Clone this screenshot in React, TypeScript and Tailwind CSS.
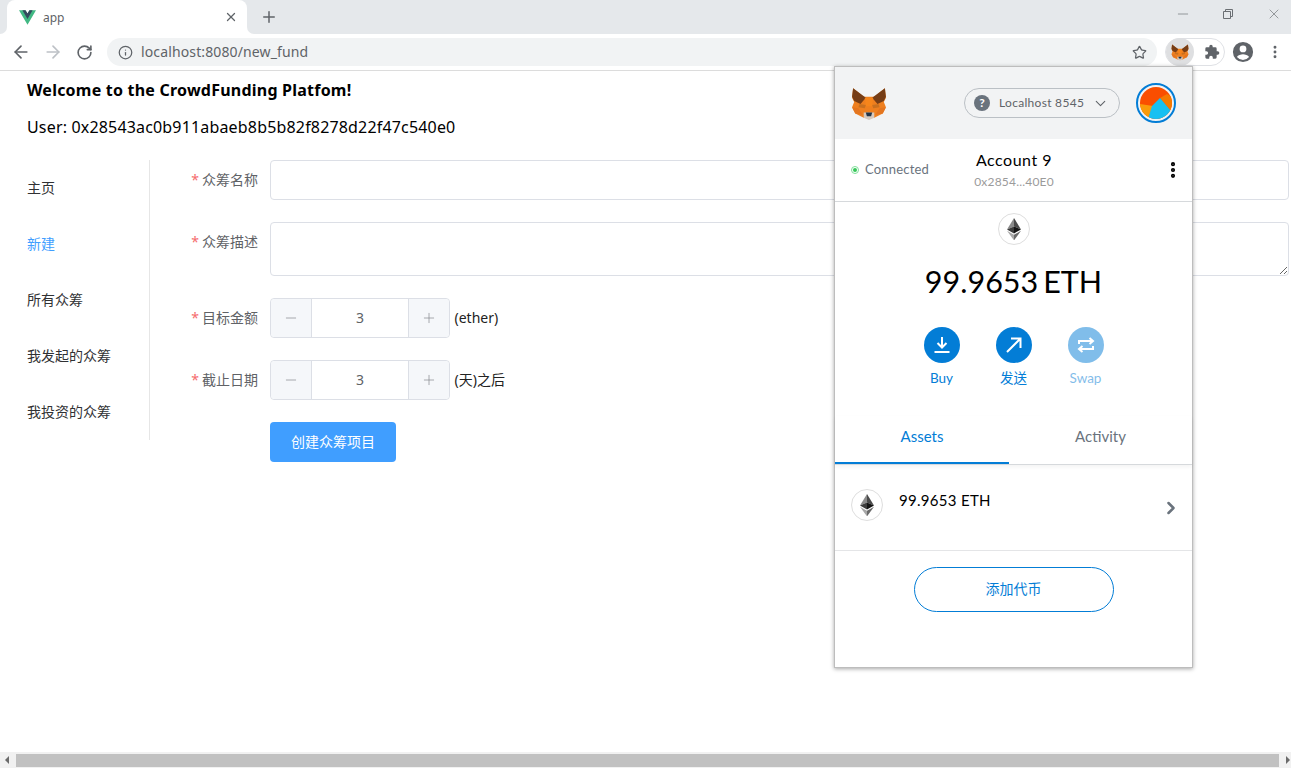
import { ArrowLeft, ArrowRight, RotateCw, Info, Star, Plus, X, Minus, MoreVertical, ChevronDown, ChevronRight } from 'lucide-react';

const cjk = '"Noto Sans CJK SC"';

function VueLogo() {
  return (
    <svg width="17" height="15" viewBox="0 0 256 221">
      <path d="M204.8 0H256L128 220.8 0 0h97.92L128 51.2 157.44 0h47.36Z" fill="#41B883" />
      <path d="M50.56 0 128 133.12 204.8 0h-47.36L128 51.2 97.92 0H50.56Z" fill="#35495E" />
    </svg>
  );
}

function Fox({ size }: { size: number }) {
  return (
    <svg width={size} height={size} viewBox="0 0 34 34">
      <polygon points="2,3 12,11 22,11 32,3 33,12 31,16 33,21 30,27 22,31 12,31 4,27 1,21 3,16 1,12" fill="#ee7f1f" />
      <polygon points="2,3 14,12 9,18 3,15 1,11" fill="#763d16" />
      <polygon points="32,3 20,12 25,18 31,15 33,11" fill="#763d16" />
      <polygon points="13,12 21,12 20,20 14,20" fill="#f6851b" />
      <polygon points="8,18 14,19 13,22 7,21" fill="#c9701f" />
      <polygon points="26,18 20,19 21,22 27,21" fill="#c9701f" />
      <polygon points="1,21 7,22 11,28 4,27" fill="#e4751f" />
      <polygon points="33,21 27,22 23,28 30,27" fill="#e4751f" />
      <polygon points="12,26 22,26 22,31 17,33 12,31" fill="#d7c9bd" />
      <polygon points="14,26 20,26 19,29.500 15,29.500" fill="#233447" />
    </svg>
  );
}

function EthMark({ size }: { size: number }) {
  return (
    <svg width={size} height={size * 1.6} viewBox="0 0 20 32">
      <polygon points="10,0 0,16.3 10,12" fill="#8a8a8a" />
      <polygon points="10,0 20,16.3 10,12" fill="#4a4a4a" />
      <polygon points="10,12 0,16.3 10,22" fill="#3c3c3c" />
      <polygon points="10,12 20,16.3 10,22" fill="#141414" />
      <polygon points="0,18.3 10,32 10,24" fill="#a8a8a8" />
      <polygon points="20,18.3 10,32 10,24" fill="#6a6a6a" />
    </svg>
  );
}

function EthBadge() {
  return (
    <div className="flex h-8 w-8 items-center justify-center rounded-full border border-[#dedede] bg-white">
      <EthMark size={14} />
    </div>
  );
}

function Stepper({ suffix }: { suffix: string }) {
  return (
    <div className="flex items-center">
      <div className="flex h-10 w-[180px] rounded border border-[#dcdfe6] text-[14px] text-[#606266]">
        <span className="flex w-[41px] items-center justify-center rounded-l bg-[#f5f7fa] border-r border-[#dcdfe6]">
          <Minus size={16} strokeWidth={1} className="text-[#808388]" />
        </span>
        <span className="flex flex-1 items-center justify-center pb-[1px]">3</span>
        <span className="flex w-[41px] items-center justify-center rounded-r bg-[#f5f7fa] border-l border-[#dcdfe6]">
          <Plus size={16} strokeWidth={1} className="text-[#808388]" />
        </span>
      </div>
      <span className="ml-[4.500px] pb-[1px] text-[14px] text-[#222]">{suffix}</span>
    </div>
  );
}

function FormRow({ label, children, className }: { label: string; children: React.ReactNode; className?: string }) {
  return (
    <div className={`flex ${className ?? ''}`}>
      <label className="flex h-10 w-[120px] shrink-0 items-center justify-end pb-[1px] pr-3 text-[14px] text-[#606266]">
        <span className="mr-[3px] text-[#f56c6c]">*</span>
        {label}
      </label>
      <div className="min-w-0 flex-1">{children}</div>
    </div>
  );
}

function ActionButton({ label, faded, children }: { label: string; faded?: boolean; children: React.ReactNode }) {
  return (
    <div className={`flex w-9 flex-col items-center ${faded ? 'opacity-50' : ''}`}>
      <div className="flex h-9 w-9 items-center justify-center rounded-full bg-[#037dd6]">{children}</div>
      <span className="mt-[7px] whitespace-nowrap text-[13.500px] leading-[16px] text-[#037dd6]">{label}</span>
    </div>
  );
}

function MetaMaskPopup() {
  return (
    <div className="absolute left-[834px] top-[66px] flex h-[602px] w-[359px] flex-col border border-[#bdbdbd] bg-white font-['Lato','Noto_Sans_CJK_SC',sans-serif] shadow-[0_1px_4px_rgba(0,0,0,0.35)]">
      <div className="flex h-[72px] shrink-0 items-center justify-between bg-[#f2f3f4] pl-[16px] pr-4">
        <Fox size={36} />
        <div className="flex items-center gap-4">
          <div className="flex h-[30px] w-[156px] items-center rounded-full border border-[#bbc0c5] pl-[9px] pr-[10px] text-[12px] text-[#5f6368]">
            <span className="flex h-[16px] w-[16px] items-center justify-center rounded-full bg-[#6a737d] text-[12px] font-bold leading-none text-white">?</span>
            <span className="ml-[9px] flex-1 whitespace-nowrap tracking-[0.3px]">Localhost 8545</span>
            <ChevronDown size={17} strokeWidth={1.5} className="text-[#5f6368]" />
          </div>
          <div className="flex h-10 w-10 items-center justify-center rounded-full border-2 border-[#037dd6]">
            <svg width="32" height="32" viewBox="0 0 32 32" className="rounded-full">
              <rect width="32" height="32" fill="#fa4e00" />
              <polygon points="20,11 27,7 32,10 32,24 31,24" fill="#f57a00" />
              <polygon points="0,17 13,19 8,32 0,32" fill="#f99b0a" />
              <polygon points="20,11 31,24 32,32 8,32 12,19" fill="#17c0f2" />
            </svg>
          </div>
        </div>
      </div>
      <div className="relative flex h-[63px] shrink-0 items-center border-b border-[#d6d9dc] pl-[16px]">
        <span className="flex h-[8px] w-[8px] items-center justify-center rounded-full border border-[#7fe09a] bg-white">
          <span className="h-[4px] w-[4px] rounded-full bg-[#37c75a]" />
        </span>
        <span className="ml-[6px] text-[13px] tracking-[0.2px] text-[#6a737d]">Connected</span>
        <div className="absolute left-[140px] top-[11px] flex w-[78px] flex-col items-center whitespace-nowrap">
          <span className="text-[16px] leading-[20px] tracking-[0.5px] text-black">Account 9</span>
          <span className="mt-[4px] text-[12px] leading-[16px] tracking-[0.2px] text-[#9b9b9b]">0x2854...40E0</span>
        </div>
        <MoreVertical size={20} strokeWidth={3} className="absolute right-[9px] top-[21px] text-black" />
      </div>
      <div className="flex flex-col items-center pt-[11px]">
        <EthBadge />
        <div className="mt-[16px] flex h-10 items-center gap-[5px] text-[30.500px] leading-10 text-black">
          <span>99.9653</span>
          <span>ETH</span>
        </div>
        <div className="mt-[26px] flex gap-9">
          <ActionButton label="Buy">
            <svg width="18" height="18" viewBox="0 0 18 18" fill="none" stroke="white" strokeWidth="2">
              <path d="M9 1v10M4.500 7 9 11.500 13.500 7M1.500 16h15" />
            </svg>
          </ActionButton>
          <ActionButton label="发送">
            <svg width="18" height="18" viewBox="0 0 18 18" fill="none" stroke="white" strokeWidth="2">
              <path d="M2 16 15 3M6 2.500h9.500V12" />
            </svg>
          </ActionButton>
          <ActionButton label="Swap" faded>
            <svg width="18" height="18" viewBox="0 0 18 18" fill="none" stroke="white" strokeWidth="2">
              <path d="M2 8V5h13M12.500 2 16 5l-3.500 3M16 10v3H3M5.500 10 2 13l3.500 3" />
            </svg>
          </ActionButton>
        </div>
      </div>
      <div className="mt-[30px] flex h-[49px] shrink-0 border-b border-[#d6d9dc] text-[15px] shadow-[0_2px_4px_rgba(0,0,0,0.05)]">
        <div className="flex w-[174px] items-start justify-center border-b-2 border-[#037dd6] pt-[9px] text-[#037dd6]">Assets</div>
        <div className="flex flex-1 items-start justify-center pt-[9px] text-[#6a737d]">Activity</div>
      </div>
      <div className="relative flex h-[86px] shrink-0 border-b border-[#e4e5e7] pl-[16px] pt-[24px]">
        <EthBadge />
        <span className="ml-4 -mt-[1px] text-[15px] leading-[24px] tracking-[0.3px] text-black">99.9653 ETH</span>
        <ChevronRight size={20} strokeWidth={3} className="absolute right-[11px] top-[33px] text-[#6a737d]" />
      </div>
      <div className="flex justify-center pt-[16px]">
        <div className="flex h-[45px] w-[200px] items-center justify-center rounded-full border border-[#037dd6] pb-[2px] text-[14px] text-[#037dd6]">添加代币</div>
      </div>
    </div>
  );
}

export default function App() {
  const menu = ['主页', '新建', '所有众筹', '我发起的众筹', '我投资的众筹'];

  return (
    <div className="relative flex h-screen w-full flex-col overflow-hidden bg-white" style={{ fontFamily: `"Noto Sans", ${cjk}, sans-serif` }}>
      {/* tab strip */}
      <div className="relative flex h-[34px] shrink-0 items-stretch bg-[#e5e8eb] pl-[7px]">
        <div className="relative flex w-[240px] items-center rounded-t-lg bg-white pl-3 pr-[9px]">
          <span className="absolute bottom-0 -left-[7px] h-[7px] w-[7px] bg-white">
            <span className="block h-full w-full rounded-br-[7px] bg-[#e5e8eb]" />
          </span>
          <span className="absolute bottom-0 -right-[7px] h-[7px] w-[7px] bg-white">
            <span className="block h-full w-full rounded-bl-[7px] bg-[#e5e8eb]" />
          </span>
          <VueLogo />
          <span className="ml-[7px] mt-[2px] flex-1 text-[12px] text-[#5f6368]">app</span>
          <X size={14} strokeWidth={2.2} className="text-[#5f6368]" />
        </div>
        <Plus size={18} strokeWidth={2} className="ml-[13px] mt-[8px] text-[#5f6368]" />
        <div className="ml-auto flex items-start pr-[9px] pt-[6px] text-[#6b6f73]">
          <Minus size={16} strokeWidth={1} className="mr-[31px]" />
          <svg width="12" height="12" viewBox="0 0 12 12" fill="none" stroke="currentColor" strokeWidth="1" className="mr-[32px] mt-[2px]">
            <path d="M1.500 3.500h7v7h-7zM3.500 3.500v-2h7v7h-2" />
          </svg>
          <X size={16} strokeWidth={1} />
        </div>
      </div>

      {/* toolbar */}
      <div className="flex h-[37px] shrink-0 items-center border-b border-[#dcdcdc] bg-white pl-[11px]">
        <ArrowLeft size={20} strokeWidth={2} className="text-[#5f6368]" />
        <ArrowRight size={20} strokeWidth={2} className="ml-[12px] text-[#bdc1c6]" />
        <RotateCw size={17} strokeWidth={2.3} className="ml-[13px] text-[#5f6368]" />
        <div className="ml-[14px] flex h-[28px] w-[1050px] items-center rounded-full bg-[#f1f3f4] pl-[11px] pr-[10px]">
          <Info size={15} strokeWidth={2} className="text-[#5f6368]" />
          <span className="ml-[8px] -mt-[1px] flex-1 text-[14px] tracking-[0.13px] text-[#5f6368]">localhost:8080/new_fund</span>
          <Star size={15} strokeWidth={2} className="text-[#5f6368]" />
        </div>
        <div className="ml-2 flex h-[28px] w-[60px] items-center rounded-full border border-[#dfe1e5]">
          <span className="flex h-[28px] w-[28px] items-center justify-center rounded-full bg-[#dedfe1]">
            <Fox size={18} />
          </span>
          <svg width="16" height="16" viewBox="0 0 24 24" fill="#5f6368" className="ml-[10px]">
            <path d="M20.500 11H19V7a2 2 0 0 0-2-2h-4V3.500a2.500 2.500 0 0 0-5 0V5H4a2 2 0 0 0-2 2v3.800h1.500a2.700 2.700 0 0 1 0 5.400H2V20a2 2 0 0 0 2 2h3.800v-1.500a2.700 2.700 0 0 1 5.400 0V22H17a2 2 0 0 0 2-2v-4h1.500a2.500 2.500 0 0 0 0-5Z" />
          </svg>
        </div>
        <svg width="22" height="22" viewBox="0 0 24 24" fill="#5f6368" className="ml-[7px]">
          <path d="M12 1a11 11 0 1 0 0 22 11 11 0 0 0 0-22Zm0 4a3.700 3.700 0 1 1 0 7.400A3.700 3.700 0 0 1 12 5Zm0 15.600a8.700 8.700 0 0 1-6.600-3.200c.9-1.900 4.400-2.900 6.600-2.900s5.700 1 6.600 2.900a8.700 8.700 0 0 1-6.600 3.200Z" />
        </svg>
        <MoreVertical size={16} strokeWidth={2.4} className="ml-[13px] text-[#5f6368]" />
      </div>

      {/* page */}
      <div className="min-h-0 flex-1 pt-[6px]">
        <h1 className="h-[26px] pl-[27px] text-[16px] font-bold leading-[26px] tracking-[0.22px] text-black">Welcome to the CrowdFunding Platfom!</h1>
        <p className="mt-[11px] h-[26px] pl-[27px] text-[16px] leading-[26px] tracking-[0.17px] text-black">User: 0x28543ac0b911abaeb8b5b82f8278d22f47c540e0</p>
        <div className="mt-[20px] flex">
          <nav className="h-[280px] w-[150px] shrink-0 border-r border-[#e6e6e6]">
            {menu.map((item, i) => (
              <div key={item} className={`flex h-14 items-center pb-[1px] pl-[27px] text-[14px] ${i === 1 ? 'text-[#409eff]' : 'text-[#303133]'}`}>
                {item}
              </div>
            ))}
          </nav>
          <form className="min-w-0 flex-1 pr-[2px]">
            <FormRow label="众筹名称" className="mb-[22px]">
              <div className="h-10 w-full rounded border border-[#dcdfe6]" />
            </FormRow>
            <FormRow label="众筹描述" className="mb-[22px]">
              <textarea className="block h-[54px] w-full rounded border border-[#dcdfe6]" />
            </FormRow>
            <FormRow label="目标金额" className="mb-[22px]">
              <Stepper suffix="(ether)" />
            </FormRow>
            <FormRow label="截止日期" className="mb-[22px]">
              <Stepper suffix="(天)之后" />
            </FormRow>
            <div className="pl-[120px]">
              <button type="button" className="h-10 w-[126px] rounded bg-[#409eff] pb-[2px] text-[14px] text-white">创建众筹项目</button>
            </div>
          </form>
        </div>
      </div>

      {/* horizontal scrollbar */}
      <div className="flex h-4 shrink-0 items-center bg-[#f1f1f1]">
        <span className="ml-[5px] h-0 w-0 border-y-[4px] border-r-[4px] border-y-transparent border-r-[#6b6b6b]" />
        <span className="ml-[7px] h-[13px] flex-1 bg-[#c1c1c1]" />
        <span className="ml-[7px] mr-[1px] h-0 w-0 border-y-[4px] border-l-[4px] border-y-transparent border-l-[#6b6b6b]" />
      </div>

      <MetaMaskPopup />
    </div>
  );
}
